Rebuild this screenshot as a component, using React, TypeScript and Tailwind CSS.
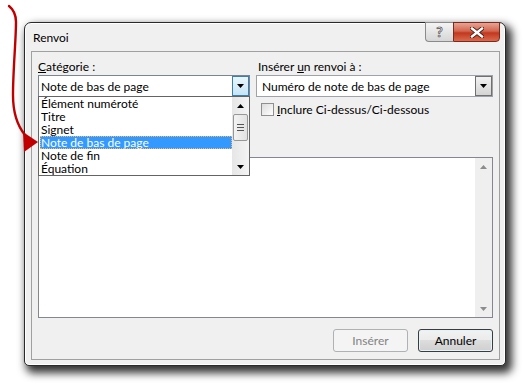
import React from "react";

const items = [
  "Élément numéroté",
  "Titre",
  "Signet",
  "Note de bas de page",
  "Note de fin",
  "Équation",
];

function Tri({ up, color = "#000" }: { up?: boolean; color?: string }) {
  return (
    <svg width="7" height="4" viewBox="0 0 7 4">
      <path d={up ? "M0 4 L3.5 0 L7 4 Z" : "M0 0 L7 0 L3.5 4 Z"} fill={color} />
    </svg>
  );
}

function RedArrow() {
  return (
    <svg
      className="pointer-events-none absolute left-0 top-0 z-20"
      width="50"
      height="160"
      viewBox="0 0 50 160"
    >
      <path
        d="M9 6 C14 10 16 14 16 22 C16 40 13 70 13 95 C13 112 16 124 25 135"
        fill="none"
        stroke="#c00000"
        strokeWidth="2.4"
        strokeLinecap="round"
      />
      <path d="M38 142 L23 132 L24 152 Z" fill="#c00000" />
    </svg>
  );
}

function TitleButtons() {
  return (
    <div className="-mt-[1px] flex h-[20px]">
      <div className="flex w-[28px] items-center justify-center rounded-bl-[4px] border border-r-0 border-[#8a8a8a] bg-gradient-to-b from-[#f4f4f4] to-[#d6d6d6]">
        <span className="text-[14px] font-bold leading-[14px] text-white [-webkit-text-stroke:0.7px_#4a4a4a]">
          ?
        </span>
      </div>
      <div className="flex w-[47px] items-center justify-center rounded-br-[4px] border border-[#7a2a1e] bg-[linear-gradient(to_bottom,#e8a493_0%,#d2664f_45%,#c2371e_55%,#d96b4e_100%)]">
        <svg width="14" height="11" viewBox="0 0 14 11">
          <path d="M2 1.5 L12 9.5 M12 1.5 L2 9.5" stroke="#4a1a12" strokeWidth="4.2" strokeLinecap="square" />
          <path d="M2 1.5 L12 9.5 M12 1.5 L2 9.5" stroke="#ffffff" strokeWidth="2.4" strokeLinecap="square" />
        </svg>
      </div>
    </div>
  );
}

function ScrollArrowBox({ up, color }: { up?: boolean; color?: string }) {
  return (
    <div className="flex h-[17px] items-center justify-center">
      <Tri up={up} color={color} />
    </div>
  );
}

function DropList() {
  return (
    <div className="absolute left-0 top-[37px] z-10 flex h-[80px] w-[212px] border border-[#646464] bg-white">
      <div className="flex-1 pl-[1px]">
        {items.map((it, i) => (
          <div
            key={it}
            className={
              i === 3
                ? "h-[13px] overflow-hidden bg-[#3399ff] pl-[1px] leading-[13px] text-white outline outline-1 -outline-offset-1 outline-dotted outline-[#f3b46c]"
                : "h-[13px] overflow-hidden pl-[1px] leading-[13px]"
            }
          >
            {it}
          </div>
        ))}
      </div>
      <div className="flex w-[17px] flex-col bg-[linear-gradient(to_right,#e6e6e6,#f4f4f4)]">
        <ScrollArrowBox up />
        <div className="flex-1">
          <div className="mx-[1px] flex h-[27px] flex-col items-center justify-center gap-[2px] rounded-[2px] border border-[#979797] bg-[linear-gradient(to_right,#f3f3f3,#e2e2e2)]">
            <div className="h-[1px] w-[7px] bg-[#555]" />
            <div className="h-[1px] w-[7px] bg-[#555]" />
            <div className="h-[1px] w-[7px] bg-[#555]" />
          </div>
        </div>
        <ScrollArrowBox />
      </div>
    </div>
  );
}

export default function App() {
  return (
    <div className="relative min-h-[385px] bg-white pl-[24px] pt-[22px] font-['Lato',sans-serif] text-[12px] leading-[15px] text-black">
      <RedArrow />
      <div className="flex h-[344px] w-[482px] flex-col rounded-b-[5px] rounded-t-[7px] border border-[#2a2a2a] bg-[#f0f0f0] pb-[5px] pl-[6px] pr-[5px] shadow-[inset_0_0_0_1px_#ffffff,4px_5px_9px_2px_rgba(0,0,0,0.8)]">
        <div className="flex h-[28px] shrink-0 items-start justify-between">
          <span className="pl-[2px] pt-[7px]">Renvoi</span>
          <TitleButtons />
        </div>
        <div className="flex flex-1 flex-col border border-[#a0a0a0] px-[6px]">
          <div className="grid h-[105px] shrink-0 grid-cols-[212px_237px] gap-x-[6px] pt-[7px]">
            <div className="relative">
              <div className="h-[15px]">
                <span className="underline">C</span>atégorie :
              </div>
              <div className="mt-[1px] flex h-[22px] items-center border border-[#7a8591] bg-white">
                <span className="flex-1 pl-[2px]">Note de bas de page</span>
                <div className="flex h-full w-[17px] items-center justify-center border border-[#3c7fb1] bg-[linear-gradient(to_bottom,#eaf6fd,#c6e5f6)]">
                  <Tri />
                </div>
              </div>
              <DropList />
            </div>
            <div>
              <div className="h-[15px] pl-[2px]">
                Insérer <span className="underline">u</span>n renvoi à :
              </div>
              <div className="mt-[1px] flex h-[22px] items-center border border-[#9fa3a8] bg-white">
                <span className="flex-1 pl-[5px]">Numéro de note de bas de page</span>
                <div className="flex h-full w-[17px] items-center justify-center border border-[#707070] bg-[linear-gradient(to_bottom,#f2f2f2,#d4d4d4)]">
                  <Tri />
                </div>
              </div>
              <div className="mt-[5px] flex items-center gap-[3px] pl-[5px]">
                <div className="h-[13px] w-[13px] border border-[#8f8f8f] bg-[linear-gradient(to_bottom_right,#dcdcdc,#ffffff)]" />
                <span>
                  <span className="underline">I</span>nclure Ci-dessus/Ci-dessous
                </span>
              </div>
            </div>
          </div>
          <div className="flex h-[161px] shrink-0 justify-end border border-[#828790] bg-white">
            <div className="flex w-[17px] flex-col justify-between bg-[#efefef]">
              <ScrollArrowBox up color="#8c8c8c" />
              <ScrollArrowBox color="#8c8c8c" />
            </div>
          </div>
          <div className="mt-[11px] flex justify-end gap-[10px]">
            <div className="flex h-[23px] w-[75px] items-center justify-center rounded-[3px] border border-[#adb2b5] bg-[#f4f4f4] text-[#838383]">
              Insérer
            </div>
            <div className="flex h-[23px] w-[75px] items-center justify-center rounded-[3px] border border-[#3c3c3c] bg-[linear-gradient(to_bottom,#f2f2f2_0%,#ebebeb_50%,#dddddd_50%,#cfcfcf_100%)] shadow-[inset_0_0_0_1px_#e0f4fc]">
              Annuler
            </div>
          </div>
        </div>
      </div>
    </div>
  );
}
